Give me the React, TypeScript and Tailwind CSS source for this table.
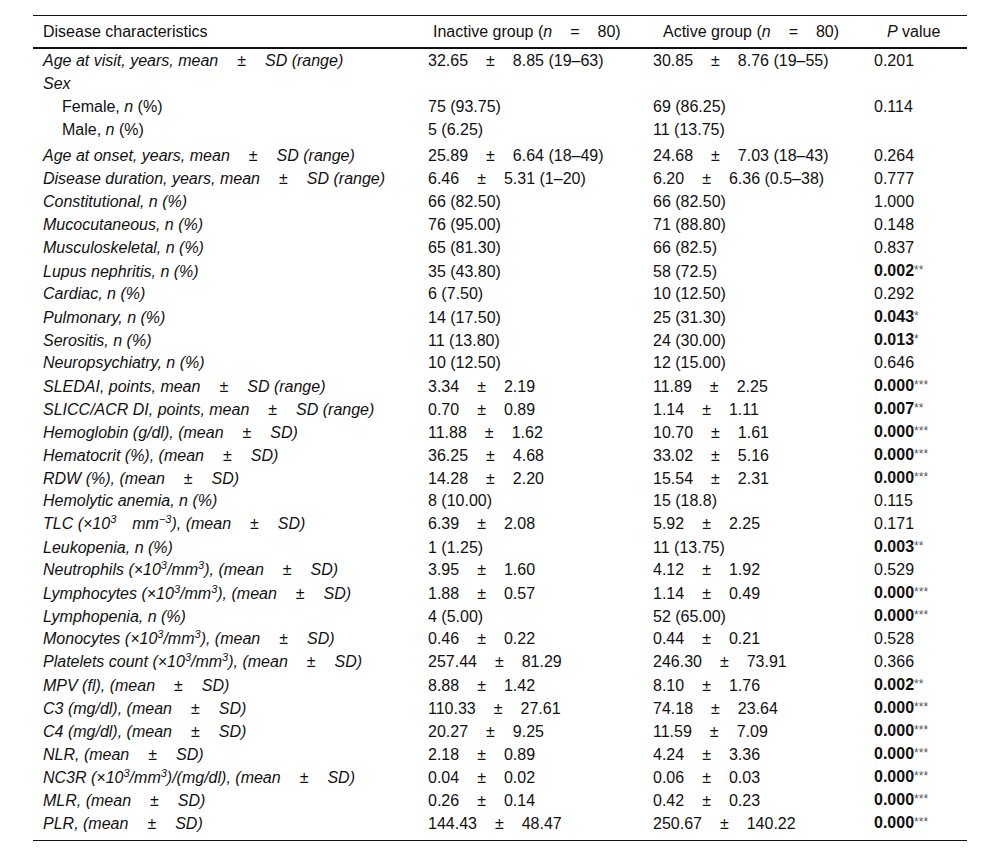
import React from "react";

const Sup = ({ children }: { children: React.ReactNode }) => (
  <sup className="text-[11px] relative -top-[6px]">{children}</sup>
);

const MSD = () => (
  <>
    (mean<span className="mx-[19px]">±</span>SD)
  </>
);
const MSDR = () => (
  <>
    mean<span className="mx-[19px]">±</span>SD (range)
  </>
);

const V = ({ a, b, r }: { a: string; b: string; r?: string }) => (
  <>
    {a}
    <span className="mx-[18px]">±</span>
    {b}
    {r ? ` (${r})` : ""}
  </>
);

const P = ({ v, s }: { v: string; s?: string }) =>
  s ? (
    <>
      <b className="font-bold">{v}</b>
      <span className="text-[12px] text-[#555] relative -top-[2px]">{s}</span>
    </>
  ) : (
    <>{v}</>
  );

type Row = {
  label: React.ReactNode;
  a?: React.ReactNode;
  b?: React.ReactNode;
  p?: React.ReactNode;
  indent?: boolean;
  extraTop?: boolean;
};

const nPct = (name: string) => <>{name}, n (%)</>;

const rows: Row[] = [
  {
    label: (
      <>
        Age at visit, years, <MSDR />
      </>
    ),
    a: <V a="32.65" b="8.85" r="19–63" />,
    b: <V a="30.85" b="8.76" r="19–55" />,
    p: <P v="0.201" />,
  },
  { label: <>Sex</> },
  {
    label: (
      <span className="not-italic">
        Female, <i>n</i> (%)
      </span>
    ),
    a: "75 (93.75)",
    b: "69 (86.25)",
    p: <P v="0.114" />,
    indent: true,
  },
  {
    label: (
      <span className="not-italic">
        Male, <i>n</i> (%)
      </span>
    ),
    a: "5 (6.25)",
    b: "11 (13.75)",
    indent: true,
  },
  {
    label: (
      <>
        Age at onset, years, <MSDR />
      </>
    ),
    a: <V a="25.89" b="6.64" r="18–49" />,
    b: <V a="24.68" b="7.03" r="18–43" />,
    p: <P v="0.264" />,
    extraTop: true,
  },
  {
    label: (
      <>
        Disease duration, years, <MSDR />
      </>
    ),
    a: <V a="6.46" b="5.31" r="1–20" />,
    b: <V a="6.20" b="6.36" r="0.5–38" />,
    p: <P v="0.777" />,
  },
  { label: nPct("Constitutional"), a: "66 (82.50)", b: "66 (82.50)", p: <P v="1.000" /> },
  { label: nPct("Mucocutaneous"), a: "76 (95.00)", b: "71 (88.80)", p: <P v="0.148" /> },
  { label: nPct("Musculoskeletal"), a: "65 (81.30)", b: "66 (82.5)", p: <P v="0.837" /> },
  { label: nPct("Lupus nephritis"), a: "35 (43.80)", b: "58 (72.5)", p: <P v="0.002" s="**" /> },
  { label: nPct("Cardiac"), a: "6 (7.50)", b: "10 (12.50)", p: <P v="0.292" /> },
  { label: nPct("Pulmonary"), a: "14 (17.50)", b: "25 (31.30)", p: <P v="0.043" s="*" /> },
  { label: nPct("Serositis"), a: "11 (13.80)", b: "24 (30.00)", p: <P v="0.013" s="*" /> },
  { label: nPct("Neuropsychiatry"), a: "10 (12.50)", b: "12 (15.00)", p: <P v="0.646" /> },
  {
    label: (
      <>
        SLEDAI, points, <MSDR />
      </>
    ),
    a: <V a="3.34" b="2.19" />,
    b: <V a="11.89" b="2.25" />,
    p: <P v="0.000" s="***" />,
  },
  {
    label: (
      <>
        SLICC/ACR DI, points, <MSDR />
      </>
    ),
    a: <V a="0.70" b="0.89" />,
    b: <V a="1.14" b="1.11" />,
    p: <P v="0.007" s="**" />,
  },
  {
    label: (
      <>
        Hemoglobin (g/dl), <MSD />
      </>
    ),
    a: <V a="11.88" b="1.62" />,
    b: <V a="10.70" b="1.61" />,
    p: <P v="0.000" s="***" />,
  },
  {
    label: (
      <>
        Hematocrit (%), <MSD />
      </>
    ),
    a: <V a="36.25" b="4.68" />,
    b: <V a="33.02" b="5.16" />,
    p: <P v="0.000" s="***" />,
  },
  {
    label: (
      <>
        RDW (%), <MSD />
      </>
    ),
    a: <V a="14.28" b="2.20" />,
    b: <V a="15.54" b="2.31" />,
    p: <P v="0.000" s="***" />,
  },
  { label: nPct("Hemolytic anemia"), a: "8 (10.00)", b: "15 (18.8)", p: <P v="0.115" /> },
  {
    label: (
      <>
        TLC (×10<Sup>3</Sup>
        <span className="ml-[16px]">mm</span>
        <Sup>−3</Sup>), <MSD />
      </>
    ),
    a: <V a="6.39" b="2.08" />,
    b: <V a="5.92" b="2.25" />,
    p: <P v="0.171" />,
  },
  { label: nPct("Leukopenia"), a: "1 (1.25)", b: "11 (13.75)", p: <P v="0.003" s="**" /> },
  {
    label: (
      <>
        Neutrophils (×10<Sup>3</Sup>/mm<Sup>3</Sup>), <MSD />
      </>
    ),
    a: <V a="3.95" b="1.60" />,
    b: <V a="4.12" b="1.92" />,
    p: <P v="0.529" />,
  },
  {
    label: (
      <>
        Lymphocytes (×10<Sup>3</Sup>/mm<Sup>3</Sup>), <MSD />
      </>
    ),
    a: <V a="1.88" b="0.57" />,
    b: <V a="1.14" b="0.49" />,
    p: <P v="0.000" s="***" />,
  },
  { label: nPct("Lymphopenia"), a: "4 (5.00)", b: "52 (65.00)", p: <P v="0.000" s="***" /> },
  {
    label: (
      <>
        Monocytes (×10<Sup>3</Sup>/mm<Sup>3</Sup>), <MSD />
      </>
    ),
    a: <V a="0.46" b="0.22" />,
    b: <V a="0.44" b="0.21" />,
    p: <P v="0.528" />,
  },
  {
    label: (
      <>
        Platelets count (×10<Sup>3</Sup>/mm<Sup>3</Sup>), <MSD />
      </>
    ),
    a: <V a="257.44" b="81.29" />,
    b: <V a="246.30" b="73.91" />,
    p: <P v="0.366" />,
  },
  {
    label: (
      <>
        MPV (fl), <MSD />
      </>
    ),
    a: <V a="8.88" b="1.42" />,
    b: <V a="8.10" b="1.76" />,
    p: <P v="0.002" s="**" />,
  },
  {
    label: (
      <>
        C3 (mg/dl), <MSD />
      </>
    ),
    a: <V a="110.33" b="27.61" />,
    b: <V a="74.18" b="23.64" />,
    p: <P v="0.000" s="***" />,
  },
  {
    label: (
      <>
        C4 (mg/dl), <MSD />
      </>
    ),
    a: <V a="20.27" b="9.25" />,
    b: <V a="11.59" b="7.09" />,
    p: <P v="0.000" s="***" />,
  },
  {
    label: (
      <>
        NLR, <MSD />
      </>
    ),
    a: <V a="2.18" b="0.89" />,
    b: <V a="4.24" b="3.36" />,
    p: <P v="0.000" s="***" />,
  },
  {
    label: (
      <>
        NC3R (×10<Sup>3</Sup>/mm<Sup>3</Sup>)/(mg/dl), <MSD />
      </>
    ),
    a: <V a="0.04" b="0.02" />,
    b: <V a="0.06" b="0.03" />,
    p: <P v="0.000" s="***" />,
  },
  {
    label: (
      <>
        MLR, <MSD />
      </>
    ),
    a: <V a="0.26" b="0.14" />,
    b: <V a="0.42" b="0.23" />,
    p: <P v="0.000" s="***" />,
  },
  {
    label: (
      <>
        PLR, <MSD />
      </>
    ),
    a: <V a="144.43" b="48.47" />,
    b: <V a="250.67" b="140.22" />,
    p: <P v="0.000" s="***" />,
  },
];

const COLS = "grid grid-cols-[385px_225px_221px_103px]";

export default function App() {
  return (
    <div
      className="w-[1000px] h-[856px] bg-white text-[#111] text-[16px] leading-[23px]"
      style={{ fontFamily: '"Liberation Sans", Arial, sans-serif' }}
    >
      <div className="ml-[33px] pt-[15px] w-[934px]">
        <div className="border-t border-[#111]" />
        <div className={`${COLS} h-[33px] items-center border-b-2 border-[#111]`}>
          <div className="pl-[10px]">Disease characteristics</div>
          <div className="pl-[15px] whitespace-nowrap">
            Inactive group (<i>n</i>
            <span className="mx-[18px]">=</span>80)
          </div>
          <div className="pl-[20px] whitespace-nowrap">
            Active group (<i>n</i>
            <span className="mx-[18px]">=</span>80)
          </div>
          <div className="pl-[23px] whitespace-nowrap">
            <i>P</i> value
          </div>
        </div>
        <div className="pb-[6px] border-b border-[#111]">
          {rows.map((r, i) => (
            <div
              key={i}
              className={`${COLS} h-[23px] items-center whitespace-nowrap ${
                r.extraTop ? "mt-[3px]" : ""
              }`}
            >
              <div className={`italic ${r.indent ? "pl-[29px]" : "pl-[10px]"}`}>{r.label}</div>
              <div className="pl-[10px]">{r.a}</div>
              <div className="pl-[10px]">{r.b}</div>
              <div className="pl-[10px]">{r.p}</div>
            </div>
          ))}
        </div>
      </div>
    </div>
  );
}
